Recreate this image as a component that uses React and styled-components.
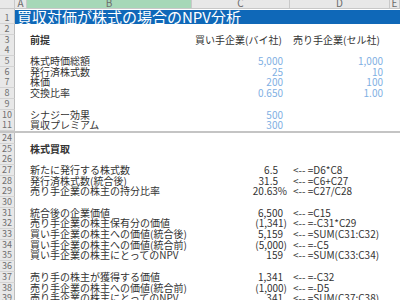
import React from 'react'
import styled, { createGlobalStyle } from 'styled-components'

const GlobalStyle = createGlobalStyle`
  html, body {
    margin: 0;
    padding: 0;
    background: #fff;
    overflow: hidden;
  }
`

const COLS = '15px 12px 165px 98px 100px 1fr'
const ROW_H = '10.7px'

const Sheet = styled.div`
  width: 400px;
  height: 300px;
  overflow: hidden;
  font-family: "Noto Sans CJK JP", "Noto Sans", sans-serif;
  font-size: 10px;
  color: #333;
`

const HeaderRow = styled.div`
  display: grid;
  grid-template-columns: ${COLS};
  height: 9px;
  background: #e8e8e8;
  border-bottom: 1px solid #c8c8c8;
  box-sizing: border-box;
`

const ColHead = styled.div`
  background: ${p => (p.$selected ? '#a6d8b8' : '#e8e8e8')};
  border-right: 1px solid #c9c9c9;
  color: #6b6b6b;
  font-size: 10px;
  line-height: 6px;
  text-align: center;
  overflow: hidden;
`

const Row = styled.div`
  display: grid;
  grid-template-columns: ${COLS};
  height: ${p => p.$h || ROW_H};
`

const RowHead = styled.div`
  display: flex;
  align-items: flex-end;
  justify-content: center;
  background: #e8e8e8;
  border-right: 1px solid #bdbdbd;
  border-bottom: 1px solid #d3d3d3;
  box-sizing: border-box;
  color: #707070;
  font-size: 9px;
  line-height: 10px;
`

const Cell = styled.div`
  padding: 0 ${p => p.$pr ?? 3}px 0 3px;
  line-height: ${ROW_H};
  white-space: nowrap;
  overflow: visible;
  text-align: ${p => p.$align || 'left'};
  color: ${p => (p.$input ? '#7fb0e3' : '#333')};
  font-weight: ${p => (p.$bold ? 700 : 400)};
`

const TitleBar = styled.div`
  grid-column: 2 / -1;
  margin-top: 1px;
  background: #0f68b8;
  color: #fff;
  font-size: 15px;
  line-height: 14px;
  padding-left: 2px;
  white-space: nowrap;
`

const Split = styled.div`
  height: 2px;
  background: #c4c4c4;
`

const top = [
  { n: 2 },
  { n: 3, b: '前提', bold: true, c: '買い手企業(バイ社)', cLeft: true, d: '売り手企業(セル社)', dLeft: true },
  { n: 4 },
  { n: 5, b: '株式時価総額', c: '5,000', d: '1,000', input: true },
  { n: 6, b: '発行済株式数', c: '25', d: '10', input: true },
  { n: 7, b: '株価', c: '200', d: '100', input: true },
  { n: 8, b: '交換比率', c: '0.650', d: '1.00', input: true },
  { n: 9 },
  { n: 10, b: 'シナジー効果', c: '500', input: true },
  { n: 11, b: '買収プレミアム', c: '300', input: true },
]

const bottom = [
  { n: 24 },
  { n: 25, b: '株式買取', bold: true },
  { n: 26 },
  { n: 27, b: '新たに発行する株式数', c: '6.5', pr: 12, f: '<-- =D6*C8' },
  { n: 28, b: '発行済株式数(統合後)', c: '31.5', pr: 12, f: '<-- =C6+C27' },
  { n: 29, b: '売り手企業の株主の持分比率', c: '20.63%', pr: 3, f: '<-- =C27/C28' },
  { n: 30 },
  { n: 31, b: '統合後の企業価値', c: '6,500', f: '<-- =C15' },
  { n: 32, b: '売り手企業の株主保有分の価値', c: '(1,341)', pr: 3, f: '<-- =-C31*C29' },
  { n: 33, b: '買い手企業の株主への価値(統合後)', c: '5,159', f: '<-- =SUM(C31:C32)' },
  { n: 34, b: '買い手企業の株主への価値(統合前)', c: '(5,000)', pr: 3, f: '<-- =-C5' },
  { n: 35, b: '買い手企業の株主にとってのNPV', c: '159', f: '<-- =SUM(C33:C34)' },
  { n: 36 },
  { n: 37, b: '売り手の株主が獲得する価値', c: '1,341', f: '<-- =-C32' },
  { n: 38, b: '売り手企業の株主への価値(統合前)', c: '(1,000)', pr: 3, f: '<-- =-D5' },
  { n: 39, b: '売り手企業の株主にとってのNPV', c: '341', f: '<-- =SUM(C37:C38)' },
]

function SheetRow({ r }) {
  return (
    <Row>
      <RowHead>{r.n}</RowHead>
      <Cell />
      <Cell $bold={r.bold}>{r.b}</Cell>
      <Cell $align={r.cLeft ? 'left' : 'right'} $input={r.input} $pr={r.cLeft ? 3 : r.pr ?? 7}>
        {r.c}
      </Cell>
      {r.f ? (
        <Cell>{r.f}</Cell>
      ) : (
        <Cell $align={r.dLeft ? 'left' : 'right'} $input={r.input} $pr={r.dLeft ? 3 : 7}>
          {r.d}
        </Cell>
      )}
      <Cell />
    </Row>
  )
}

export default function App() {
  return (
    <Sheet>
      <GlobalStyle />
      <HeaderRow>
        <ColHead />
        <ColHead>A</ColHead>
        <ColHead $selected>B</ColHead>
        <ColHead>C</ColHead>
        <ColHead>D</ColHead>
        <ColHead>E</ColHead>
      </HeaderRow>
      <Row $h="15px">
        <RowHead>1</RowHead>
        <TitleBar>買収対価が株式の場合のNPV分析</TitleBar>
      </Row>
      {top.map(r => (
        <SheetRow key={r.n} r={r} />
      ))}
      <Split />
      {bottom.map(r => (
        <SheetRow key={r.n} r={r} />
      ))}
    </Sheet>
  )
}
